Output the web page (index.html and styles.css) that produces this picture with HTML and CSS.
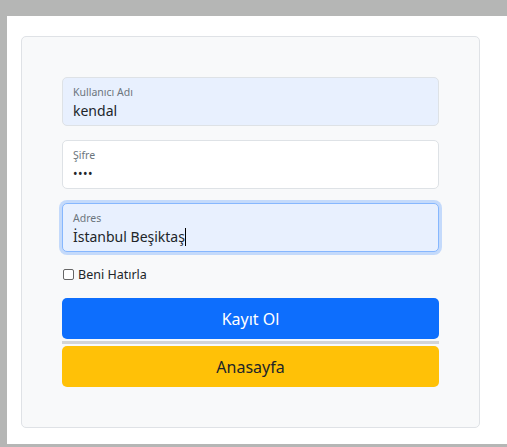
FILE: index.html
```html
<!DOCTYPE html>
<html lang="tr">
<head>
<meta charset="utf-8">
<title>Kayıt</title>
<link rel="stylesheet" href="styles.css">
</head>
<body>
<div class="page">
  <form class="card">
    <div class="field autofill">
      <span class="label">Kullanıcı Adı</span>
      <span class="value">kendal</span>
    </div>
    <div class="field">
      <span class="label">Şifre</span>
      <span class="value dots">••••</span>
    </div>
    <div class="field autofill focused">
      <span class="label">Adres</span>
      <span class="value">İstanbul Beşiktaş<span class="caret"></span></span>
    </div>
    <label class="check"><span class="box"></span>Beni Hatırla</label>
    <div class="btn primary">Kayıt Ol</div>
    <div class="sep"></div>
    <div class="btn warning">Anasayfa</div>
  </form>
</div>
</body>
</html>
```

FILE: styles.css
```css
html, body {
  margin: 0;
  padding: 0;
}
body {
  background: #b5b6b5;
  height: 447px;
  overflow: hidden;
  font-family: "Noto Sans", "Open Sans", sans-serif;
  color: #212529;
}
.page {
  margin: 16px 0 0 7px;
  height: 428px;
  background: #ffffff;
  padding: 20px 0 0 14px;
  box-sizing: border-box;
}
.card {
  width: 459px;
  height: 392px;
  box-sizing: border-box;
  background: #f8f9fa;
  border: 1px solid #dfe2e6;
  border-radius: 5px;
  padding: 40px 40px;
  display: flex;
  flex-direction: column;
}
.card > * {
  flex-shrink: 0;
}
.field {
  height: 49px;
  box-sizing: border-box;
  border: 1px solid #dee2e6;
  border-radius: 5px;
  background: #ffffff;
  padding: 7px 10px 0 10px;
  display: flex;
  flex-direction: column;
  margin-bottom: 14px;
}
.field.focused {
  margin-bottom: 0;
}
.field.autofill {
  background: #e8f0fe;
}
.field.focused {
  border-color: #86b7fe;
  box-shadow: 0 0 0 3px rgba(13, 110, 253, 0.22);
}
.label {
  font-size: 10.5px;
  line-height: 14px;
  margin-bottom: 2px;
  color: #6c757d;
}
.value {
  font-size: 14px;
  line-height: 19px;
  color: #212529;
  white-space: nowrap;
}
.value.dots {
  letter-spacing: 0.5px;
  font-size: 12px;
}
.caret {
  display: inline-block;
  width: 1px;
  height: 18px;
  background: #000;
  vertical-align: -4px;
}
.check {
  display: flex;
  align-items: center;
  font-size: 12.5px;
  height: 20px;
  margin: 12px 0 0 1px;
  color: #212529;
}
.box {
  width: 9px;
  height: 9px;
  border: 1px solid #666;
  border-radius: 2px;
  background: #fff;
  margin-right: 4px;
}
.btn {
  height: 41px;
  border-radius: 5px;
  display: flex;
  align-items: center;
  justify-content: center;
  font-size: 16px;
}
.btn.primary {
  margin-top: 14px;
  background: #0d6efd;
  color: #ffffff;
}
.btn.warning {
  background: #ffc107;
  color: #212529;
}
.sep {
  height: 3px;
  margin: 2px 0 2px;
  background: #d3d4d6;
}
```
